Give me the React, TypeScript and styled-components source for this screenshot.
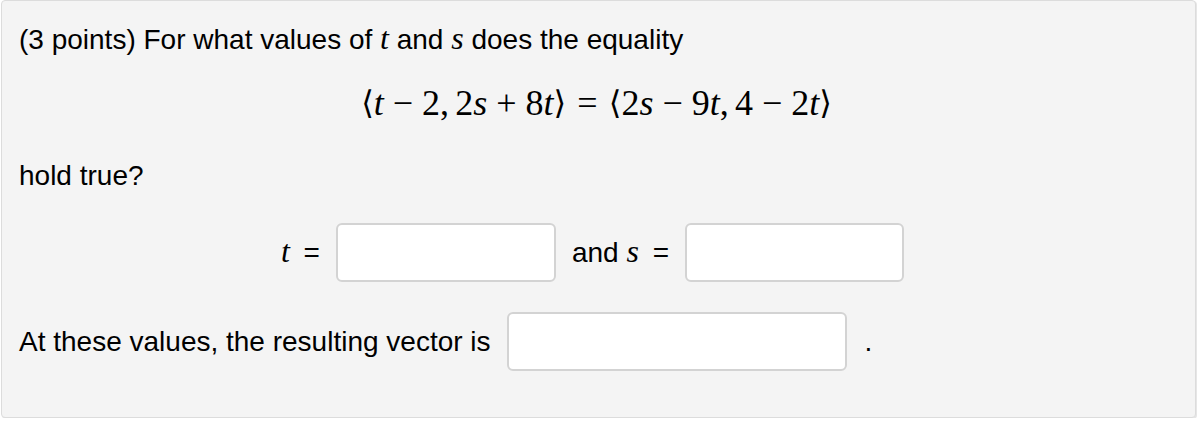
import * as React from 'react';
import styled, { createGlobalStyle } from 'styled-components';

const GlobalStyle = createGlobalStyle`
  html, body {
    margin: 0;
    padding: 0;
    background: #fff;
  }
  body {
    font-family: 'Liberation Sans', Arial, sans-serif;
    color: #000;
  }
`;

const Panel = styled.div`
  box-sizing: border-box;
  width: 1195px;
  height: 418px;
  margin-left: 1px;
  padding: 22px 17px 0 17px;
  background: #f4f4f4;
  border: 1px solid #dcdcdc;
  border-radius: 4px;
  box-shadow: 1px 1px 0 #e6e6e6;
  font-size: 28px;
`;

const Para = styled.p<{ top?: number }>`
  margin: ${(props) => props.top || 0}px 0 0 0;
  line-height: 34px;
  white-space: nowrap;
`;

const Var = styled.span`
  font-family: 'Liberation Serif', 'Times New Roman', serif;
  font-style: italic;
`;

const InlineVar = styled(Var)<{ after?: number }>`
  font-size: 32px;
  line-height: 0;
  margin-right: ${(props) => props.after || 0}px;
`;

const MathLine = styled.div`
  margin-top: 26px;
  height: 40px;
  line-height: 40px;
  display: flex;
  justify-content: center;
  padding-right: 4px;
  font-family: 'Liberation Serif', 'Times New Roman', 'DejaVu Serif', serif;
  font-size: 36px;
  white-space: nowrap;
`;

const Op = styled.span<{ wide?: boolean }>`
  margin: 0 ${(props) => (props.wide ? 0.31 : 0.25)}em;
`;

const Bracket = styled.span`
  font-family: 'DejaVu Serif', serif;
  font-size: 0.9em;
  display: inline-block;
`;

const Comma = styled.span`
  margin-right: 0.17em;
`;

const Row = styled.div<{ top: number; center?: boolean }>`
  margin-top: ${(props) => props.top}px;
  display: flex;
  align-items: center;
  justify-content: ${(props) => (props.center ? 'center' : 'flex-start')};
  padding-right: ${(props) => (props.center ? 12 : 0)}px;
  gap: 16px;
  white-space: nowrap;
`;

const Label = styled.span`
  line-height: 34px;
`;

const Input = styled.input<{ w: number }>`
  box-sizing: border-box;
  width: ${(props) => props.w}px;
  height: 59px;
  border: 2px solid #d3d3d3;
  border-radius: 6px;
  background: #fff;
  outline: none;
  font-size: 22px;
  padding: 0 10px;
`;

const Dot = styled.span`
  margin-left: 2px;
  line-height: 34px;
`;

const App = (): JSX.Element => {
  return (
    <>
      <GlobalStyle />
      <Panel>
        <Para>
          (3 points) For what values of <InlineVar>t</InlineVar> and <InlineVar>s</InlineVar> does the equality
        </Para>
        <MathLine>
          <Bracket>⟨</Bracket>
          <Var>t</Var>
          <Op>−</Op>2<Comma>,</Comma>2<Var>s</Var>
          <Op>+</Op>8<Var>t</Var>
          <Bracket>⟩</Bracket>
          <Op wide>=</Op>
          <Bracket>⟨</Bracket>2<Var>s</Var>
          <Op>−</Op>9<Var>t</Var>
          <Comma>,</Comma>4<Op>−</Op>2<Var>t</Var>
          <Bracket>⟩</Bracket>
        </MathLine>
        <Para top={36}>hold true?</Para>
        <Row top={30} center>
          <Label>
            <InlineVar after={6}>t</InlineVar> =
          </Label>
          <Input w={220} />
          <Label>
            and <InlineVar after={6}>s</InlineVar> =
          </Label>
          <Input w={219} />
        </Row>
        <Row top={30}>
          <Label>At these values, the resulting vector is</Label>
          <Input w={340} />
          <Dot>.</Dot>
        </Row>
      </Panel>
    </>
  );
};

export default App;
